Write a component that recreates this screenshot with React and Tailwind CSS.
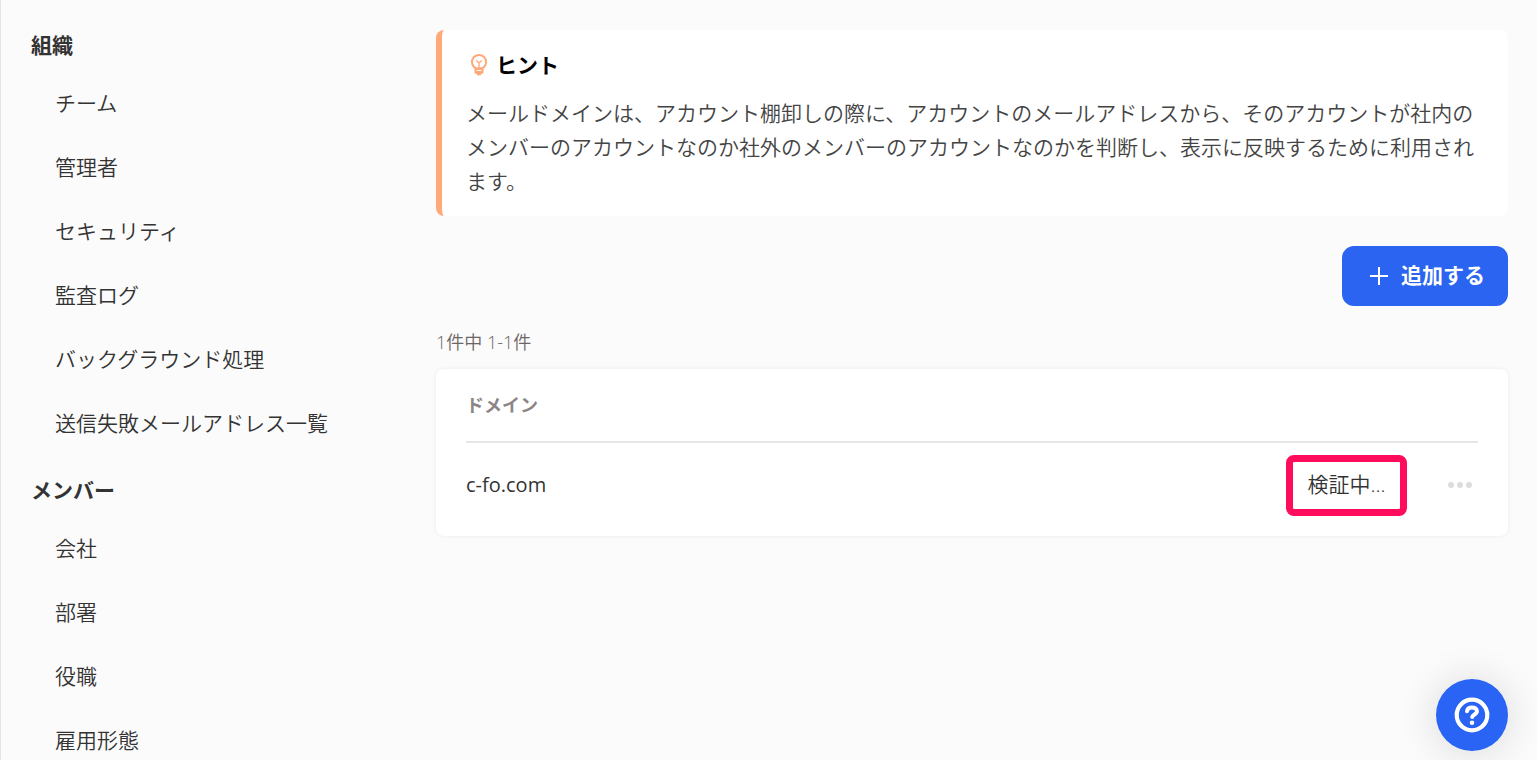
import React from 'react';

const NAV_SECTIONS = [
    {
        title: '組織',
        items: ['チーム', '管理者', 'セキュリティ', '監査ログ', 'バックグラウンド処理', '送信失敗メールアドレス一覧'],
    },
    {
        title: 'メンバー',
        items: ['会社', '部署', '役職', '雇用形態'],
    },
];

const DOMAINS = [{ id: 1, name: 'c-fo.com', status: '検証中...' }];

function BulbIcon() {
    return (
        <svg width="18" height="24" viewBox="0 0 18 24" fill="none" stroke="currentColor" aria-hidden="true">
            <circle cx="9" cy="9" r="7.100" strokeWidth="2" />
            <path d="M6.300 7.500 9 10l2.700-2.500M9 10v5" strokeWidth="1.300" />
            <path d="M4.500 14.500h9v5a1.200 1.200 0 0 1-1.200 1.200h-.8L10.300 22.500H7.700L6.500 20.700h-.8A1.200 1.200 0 0 1 4.500 19.500z" fill="currentColor" stroke="none" />
            <path d="M6.500 17.500h5" stroke="#fff" strokeWidth="1" />
        </svg>
    );
}

function PlusIcon() {
    return (
        <svg width="18" height="18" viewBox="0 0 18 18" stroke="currentColor" strokeWidth="2" aria-hidden="true">
            <path d="M9 0v18M0 9h18" />
        </svg>
    );
}

function DotsIcon() {
    return (
        <svg width="24" height="6" viewBox="0 0 24 6" fill="currentColor" aria-hidden="true">
            <circle cx="3" cy="3" r="3" />
            <circle cx="12" cy="3" r="3" />
            <circle cx="21" cy="3" r="3" />
        </svg>
    );
}

function HelpIcon() {
    return (
        <svg width="36" height="36" viewBox="0 0 36 36" fill="none" stroke="currentColor" aria-hidden="true">
            <circle cx="18" cy="18" r="15.300" strokeWidth="4.200" />
            <path d="M13 14.200C13.400 11.600 15.400 10.400 18 10.400c2.900 0 4.900 1.500 4.900 3.900 0 3.400-4.700 3.500-4.700 5.800" strokeWidth="4" strokeLinecap="round" />
            <circle cx="18" cy="25.800" r="2.300" fill="currentColor" stroke="none" />
        </svg>
    );
}

function Sidebar() {
    return (
        <nav className="flex w-[435px] shrink-0 flex-col gap-[9px] pt-5 pl-[30px]">
            {NAV_SECTIONS.map(section => (
                <section key={section.title}>
                    <h2 className="flex h-[52px] items-center font-bold">{section.title}</h2>
                    <ul>
                        {section.items.map(item => (
                            <li key={item}>
                                <a href="#" className="flex h-16 items-center pl-6 hover:text-[#2a64f0]">{item}</a>
                            </li>
                        ))}
                    </ul>
                </section>
            ))}
        </nav>
    );
}

export default function App() {
    return (
        <div className="flex h-screen overflow-hidden border-l border-[#e5e5e5] bg-[#fbfbfb] font-['Open_Sans','Noto_Sans_CJK_JP',sans-serif] text-[21px] font-[350] text-[#333333]" lang="ja">
            <Sidebar />

            <main className="min-w-0 flex-1 pt-[30px] pr-[29px]">
                {/* Hint */}
                <section className="rounded-lg border-l-[6px] border-[#ffa878] bg-white px-6 py-[18px] leading-[34px]">
                    <h3 className="mb-[14px] flex items-center gap-2 font-bold text-black">
                        <span className="pl-1 text-[#ffa878]"><BulbIcon /></span>
                        ヒント
                    </h3>
                    <p className="text-[#444444]">
                        メールドメインは、アカウント棚卸しの際に、アカウントのメールアドレスから、そのアカウントが社内のメンバーのアカウントなのか社外のメンバーのアカウントなのかを判断し、表示に反映するために利用されます。
                    </p>
                </section>

                <div className="mt-[30px] flex justify-end">
                    <button type="button" className="flex h-[60px] items-center gap-[13px] rounded-xl bg-[#2a64f0] pr-[23px] pl-7 font-bold text-white">
                        <PlusIcon />
                        追加する
                    </button>
                </div>

                <p className="mt-6 text-[18px] leading-6 text-[#6b6665]">1件中 1-1件</p>

                {/* Domain list */}
                <div className="mt-[15px] rounded-lg bg-white px-[30px] pb-[9px] shadow-[0_0_5px_rgba(0,0,0,0.07)]">
                    <table className="w-full">
                        <thead>
                            <tr className="h-[73px] border-b-2 border-[#e6e6e6]">
                                <th colSpan={3} className="text-left text-[18px] font-bold text-[#8b8685]">ドメイン</th>
                            </tr>
                        </thead>
                        <tbody>
                            {DOMAINS.map(domain => (
                                <tr key={domain.id} className="h-[85px]">
                                    <td className="text-[20px] font-normal">{domain.name}</td>
                                    <td>
                                        <div className="ml-auto flex h-[61px] w-[121px] items-center justify-center rounded-lg border-[7px] border-[#ff0d5c]">
                                            {domain.status}
                                        </div>
                                    </td>
                                    <td className="w-[71px]">
                                        <button type="button" aria-label="メニュー" className="ml-auto flex h-9 w-9 items-center justify-center text-[#dcdcdc]">
                                            <DotsIcon />
                                        </button>
                                    </td>
                                </tr>
                            ))}
                        </tbody>
                    </table>
                </div>
            </main>

            <button
                type="button"
                aria-label="ヘルプ"
                className="fixed right-[29px] bottom-[9px] flex h-[72px] w-[72px] items-center justify-center rounded-full bg-[#2a64f4] text-white shadow-[0_2px_40px_rgba(0,0,0,0.14)]"
            >
                <HelpIcon />
            </button>
        </div>
    );
}
